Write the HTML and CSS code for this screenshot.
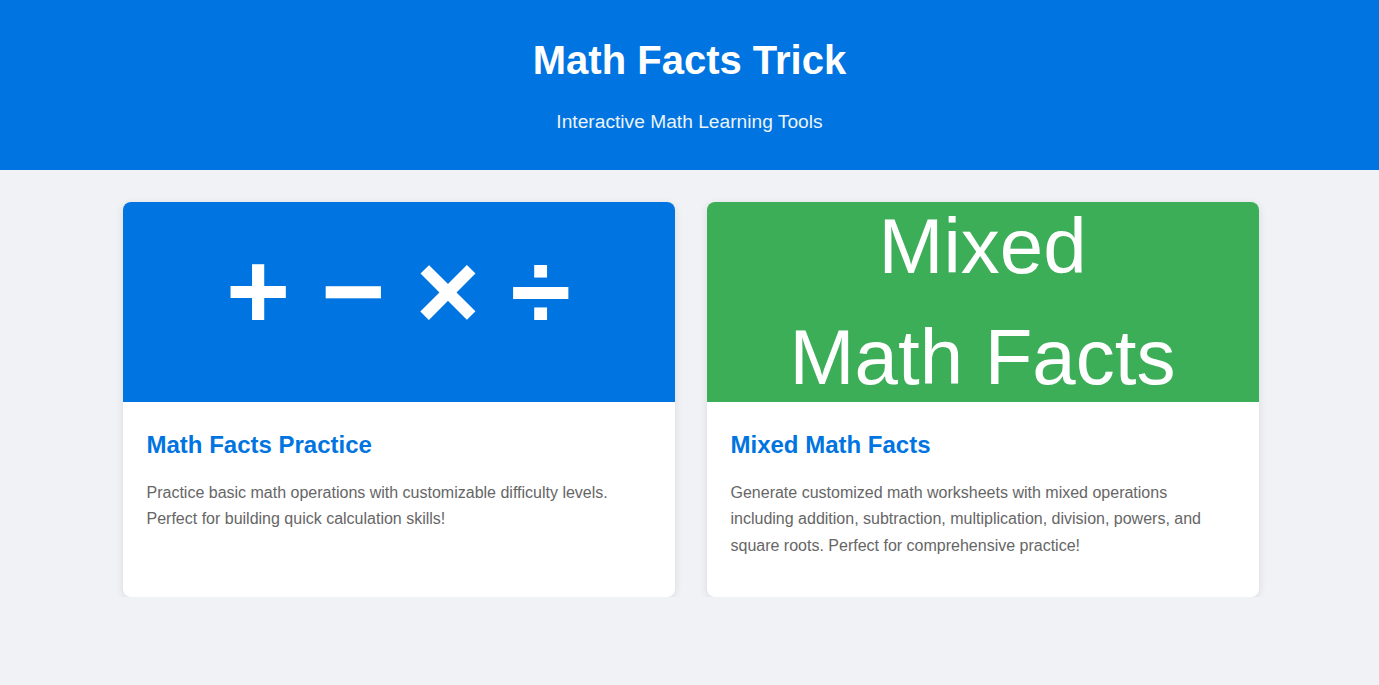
FILE: index.html
```html
<!DOCTYPE html>
<html lang="en">
<head>
<meta charset="utf-8">
<title>Math Facts Trick</title>
<link rel="stylesheet" href="styles.css">
</head>
<body>
<header class="site-header">
  <h1 class="site-title">Math Facts Trick</h1>
  <p class="site-subtitle">Interactive Math Learning Tools</p>
</header>
<main class="tools">
  <a class="card" href="#">
    <div class="card-banner banner-blue">
      <span class="ops">+ − × ÷</span>
    </div>
    <div class="card-body">
      <h2 class="card-title">Math Facts Practice</h2>
      <p class="card-text">Practice basic math operations with customizable difficulty levels. Perfect for building quick calculation skills!</p>
    </div>
  </a>
  <a class="card" href="#">
    <div class="card-banner banner-green">
      <span class="mixed">Mixed<br>Math Facts</span>
    </div>
    <div class="card-body">
      <h2 class="card-title">Mixed Math Facts</h2>
      <p class="card-text">Generate customized math worksheets with mixed operations including addition, subtraction, multiplication, division, powers, and square roots. Perfect for comprehensive practice!</p>
    </div>
  </a>
</main>
</body>
</html>
```

FILE: styles.css
```css
* { box-sizing: border-box; }
html, body { margin: 0; padding: 0; }
body {
  background: #f0f2f5;
  font-family: "Liberation Sans", Arial, sans-serif;
  color: #333;
}
.site-header {
  background: #0074e0;
  color: #fff;
  text-align: center;
  padding: 37px 16px 34px;
  height: 170px;
}
.site-title {
  margin: 0 0 28px;
  font-size: 40px;
  font-weight: 700;
  line-height: 46px;
}
.site-subtitle {
  margin: 0;
  font-size: 19.2px;
  line-height: 22px;
  opacity: 0.92;
}
.tools {
  width: 1136px;
  margin: 32px 0 0 calc((100% - 1136px) / 2 + 1px);
  display: grid;
  grid-template-columns: 1fr 1fr;
  gap: 32px;
}
.card {
  display: block;
  background: #fff;
  border-radius: 8px;
  overflow: hidden;
  box-shadow: 0 2px 8px rgba(0, 0, 0, 0.1);
  text-decoration: none;
  color: inherit;
}
.card-banner {
  height: 200px;
  display: flex;
  align-items: center;
  justify-content: center;
  color: #fff;
  overflow: hidden;
}
.banner-blue { background: #0074e0; }
.banner-green { background: #3cae58; }
.ops {
  font-size: 110px;
  font-weight: 700;
  line-height: 1;
  white-space: pre;
  padding-bottom: 22px;
}
.mixed {
  font-size: 78px;
  line-height: 111px;
  text-align: center;
  white-space: nowrap;
}
.card-body {
  padding: 28px 24px 24px;
}
.card-title {
  margin: 0 0 21px;
  font-size: 24px;
  line-height: 29px;
  font-weight: 700;
  color: #0074e0;
}
.card-text {
  margin: 0 0 14px;
  font-size: 16px;
  line-height: 26.4px;
  color: #666;
}
```
